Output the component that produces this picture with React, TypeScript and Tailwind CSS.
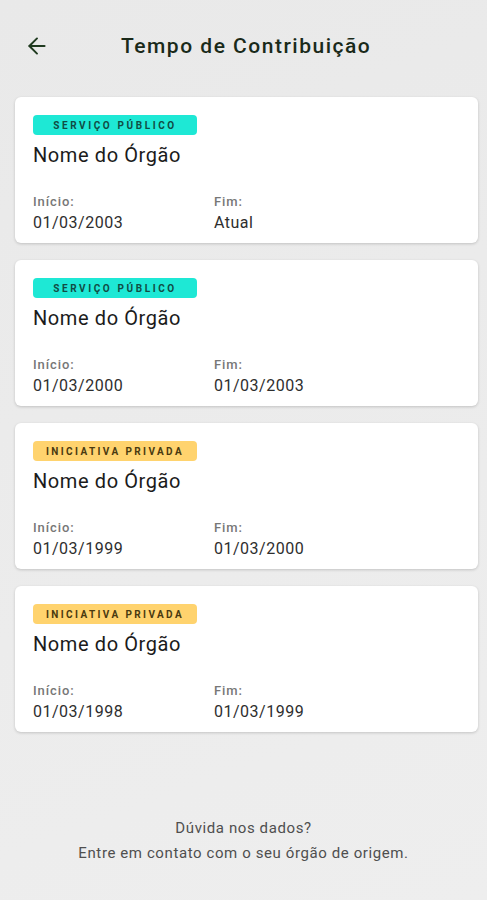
import { FiArrowLeft } from "react-icons/fi";

interface Periodo {
    tipo: "publico" | "privado";
    inicio: string;
    fim: string;
}

const periodos: Periodo[] = [
    { tipo: "publico", inicio: "01/03/2003", fim: "Atual" },
    { tipo: "publico", inicio: "01/03/2000", fim: "01/03/2003" },
    { tipo: "privado", inicio: "01/03/1999", fim: "01/03/2000" },
    { tipo: "privado", inicio: "01/03/1998", fim: "01/03/1999" },
];

function Badge({ tipo }: { tipo: Periodo["tipo"] }) {
    if (tipo === "publico") {
        return (
            <span className="flex h-[20px] w-[164px] items-center justify-center rounded-[4px] bg-[#1ee8d5] text-[10px] font-bold tracking-[2.6px] text-[#114c44]">
                SERVIÇO PÚBLICO
            </span>
        );
    }
    return (
        <span className="flex h-[20px] w-[164px] items-center justify-center rounded-[4px] bg-[#ffd36e] text-[10px] font-bold tracking-[2.4px] text-[#4a3a10]">
            INICIATIVA PRIVADA
        </span>
    );
}

function Card({ periodo }: { periodo: Periodo }) {
    return (
        <div className="flex h-[146px] flex-col rounded-[6px] bg-white pl-[18px] pt-[18px] shadow-[0_1px_3px_rgba(0,0,0,0.18)]">
            <Badge tipo={periodo.tipo} />
            <div className="mt-[6px] text-[20px] leading-[28px] tracking-[0.6px] text-[#1b1b1b]">Nome do Órgão</div>
            <div className="mt-[25px] flex">
                <div className="w-[181px]">
                    <div className="text-[13px] font-medium leading-[16px] tracking-[0.9px] text-[#777777]">Início:</div>
                    <div className="mt-[3px] text-[16px] leading-[20px] tracking-[0.5px] text-[#2e2e2e]">{periodo.inicio}</div>
                </div>
                <div>
                    <div className="text-[13px] font-medium leading-[16px] tracking-[0.9px] text-[#777777]">Fim:</div>
                    <div className="mt-[3px] text-[16px] leading-[20px] tracking-[0.5px] text-[#2e2e2e]">{periodo.fim}</div>
                </div>
            </div>
        </div>
    );
}

export default function App() {
    return (
        <div className="flex h-[900px] w-[487px] flex-col bg-[linear-gradient(160deg,#e9e9e9_0%,#ececec_60%,#eeeeee_100%)] font-['Roboto',sans-serif]">
            {/* Header */}
            <header className="flex h-[97px] items-start pt-[30px]">
                <button className="ml-[24px] flex h-[32px] w-[26px] items-center text-[#1f3a1f]">
                    <FiArrowLeft size={26} strokeWidth={1.8} />
                </button>
                <h1 className="ml-[71px] text-[21px] font-medium leading-[32px] tracking-[1.5px] text-[#1a2a1a]">Tempo de Contribuição</h1>
            </header>

            {/* Cards */}
            <main className="flex flex-col gap-[17px] pl-[15px] pr-[9px]">
                {periodos.map((p, i) => (
                    <Card key={i} periodo={p} />
                ))}
            </main>

            {/* Footer */}
            <footer className="mt-auto pb-[34px] text-center text-[15px] leading-[25px] tracking-[0.6px] text-[#4f4f4f]">
                <p>Dúvida nos dados?</p>
                <p>Entre em contato com o seu órgão de origem.</p>
            </footer>
        </div>
    );
}
